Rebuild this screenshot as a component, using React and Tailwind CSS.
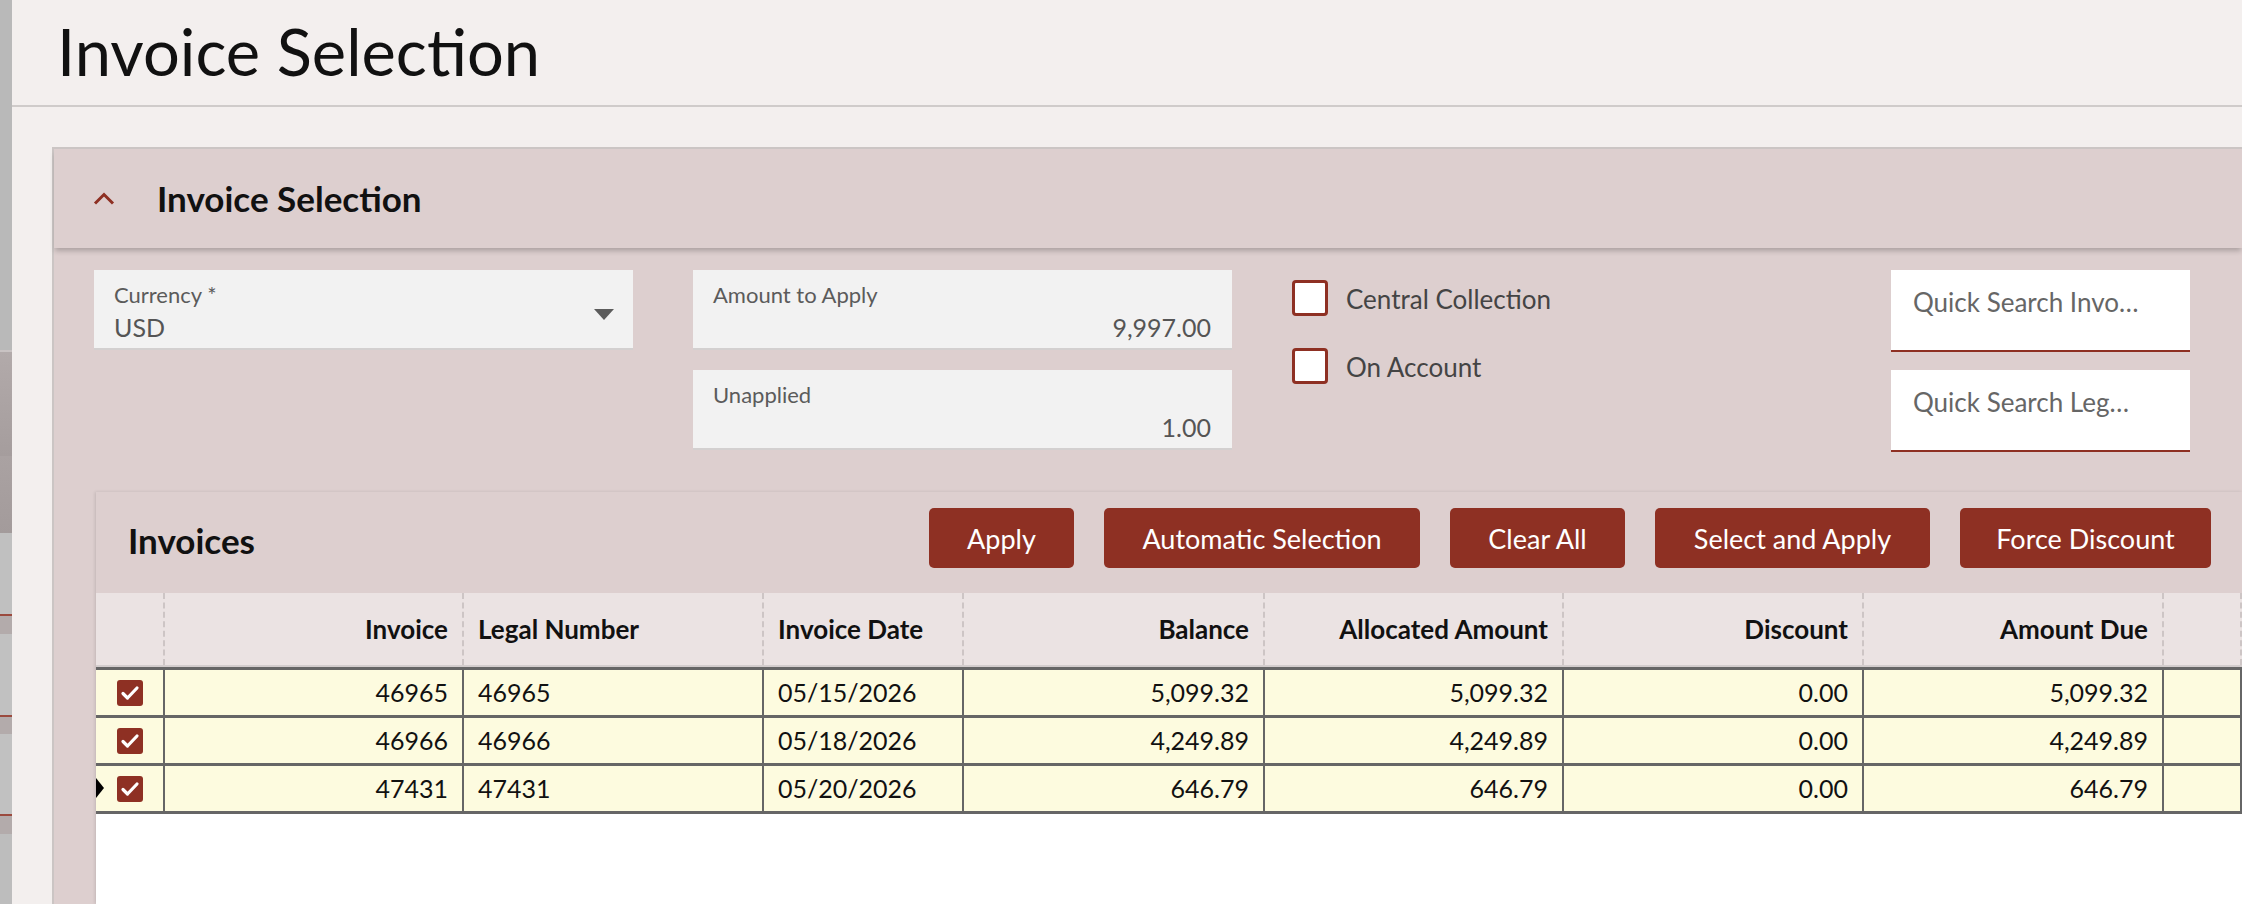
import React from 'react';

const buttons = [
  { label: 'Apply', w: 'w-[145px]' },
  { label: 'Automatic Selection', w: 'w-[316px]' },
  { label: 'Clear All', w: 'w-[175px]' },
  { label: 'Select and Apply', w: 'w-[275px]' },
  { label: 'Force Discount', w: 'w-[251px]' },
];

const columns = [
  { label: 'Invoice', right: true },
  { label: 'Legal Number' },
  { label: 'Invoice Date' },
  { label: 'Balance', right: true },
  { label: 'Allocated Amount', right: true },
  { label: 'Discount', right: true },
  { label: 'Amount Due', right: true },
  { label: '' },
];

const rows = [
  ['46965', '46965', '05/15/2026', '5,099.32', '5,099.32', '0.00', '5,099.32', ''],
  ['46966', '46966', '05/18/2026', '4,249.89', '4,249.89', '0.00', '4,249.89', ''],
  ['47431', '47431', '05/20/2026', '646.79', '646.79', '0.00', '646.79', ''],
];

const gridCols = 'grid grid-cols-[69px_299px_300px_200px_301px_299px_300px_300px_1fr]';

const Field = ({ label, value, dropdown }) => (
  <div className="flex h-[80px] w-[539px] border-b-2 border-[#d3d0d0] bg-[#f2f2f2]">
    <div className="flex flex-1 flex-col pl-[20px] pr-[21px] pt-[14px]">
      <span className="text-[22px] leading-[22px] text-[#5b5b5b]">{label}</span>
      <span className={`mt-[9px] text-[25px] leading-[25px] text-[#555] ${dropdown ? '' : 'text-right'}`}>{value}</span>
    </div>
    {dropdown && (
      <svg className="mr-[19px] mt-[39px] h-[11px] w-[20px]" viewBox="0 0 20 11">
        <polygon points="0,0 20,0 10,11" fill="#5c5c5c" />
      </svg>
    )}
  </div>
);

const CheckOption = ({ label }) => (
  <div className="flex items-center gap-[18px]">
    <div className="h-[36px] w-[36px] rounded-[4px] border-[3px] border-[#8e3023] bg-white" />
    <span className="mt-[2px] text-[26px] leading-[26px] text-[#444]">{label}</span>
  </div>
);

const QuickSearch = ({ text }) => (
  <div className="h-[82px] w-[299px] border-b-2 border-[#8e3023] bg-white pl-[22px] pt-[19px] text-[26px] leading-[26px] text-[#666]">
    {text}
  </div>
);

const CheckedBox = () => (
  <div className="flex h-[26px] w-[26px] items-center justify-center rounded-[3px] bg-[#8e3023]">
    <svg className="h-[26px] w-[26px]" viewBox="0 0 26 26">
      <polyline points="6,13.5 10.5,18 20,8" fill="none" stroke="#fff" strokeWidth="3.2" strokeLinecap="round" strokeLinejoin="round" />
    </svg>
  </div>
);

export default function App() {
  return (
    <div className="flex h-[904px] w-full overflow-hidden bg-[#f3efee] text-[#111] [font-family:Lato,sans-serif]">
      {/* sliver of the neighbouring pane */}
      <div className="flex w-[12px] flex-none flex-col">
        <div className="h-[350px] bg-[#b9b9b9]" />
        <div className="h-[106px] border-t-2 border-[#c9c3c3] bg-gradient-to-b from-[#b2aaaa] to-[#a59d9d]" />
        <div className="h-[77px] bg-gradient-to-b from-[#aaa2a2] to-[#a39b9b]" />
        <div className="h-[81px] bg-[#c0c0c0]" />
        <div className="h-[20px] border-t-2 border-[#9b4a3e] bg-[#b3abab]" />
        <div className="h-[81px] bg-[#c1c1c1]" />
        <div className="h-[19px] border-t-2 border-[#9b4a3e] bg-[#b3abab]" />
        <div className="h-[80px] bg-[#c1c1c1]" />
        <div className="h-[20px] border-t-2 border-[#9b4a3e] bg-[#b3abab]" />
        <div className="flex-1 bg-[#bdbdbd]" />
      </div>

      <div className="flex min-w-0 flex-1 flex-col">
        <div className="h-[107px] flex-none border-b-2 border-[#cfcbca] pl-[45px] pt-[19px]">
          <h1 className="text-[65px] font-normal leading-[65px]">Invoice Selection</h1>
        </div>

        <div className="flex min-h-0 flex-1 pl-[40px] pt-[40px]">
          <section className="flex min-w-0 flex-1 flex-col border-l-2 border-t-2 border-[#cbc5c4] bg-[#ddcfcf]">
            <div className="relative z-10 flex h-[99px] flex-none items-center bg-[#ddcfcf] pl-[39px] shadow-[0_4px_5px_-1px_rgba(0,0,0,0.22)]">
              <svg className="h-[13px] w-[22px]" viewBox="0 0 22 13">
                <polyline points="2,11.5 11,2.5 20,11.5" fill="none" stroke="#8e3023" strokeWidth="3" />
              </svg>
              <h2 className="ml-[42px] text-[35px] font-bold leading-[35px]">Invoice Selection</h2>
            </div>

            <div className="flex min-h-0 flex-1 flex-col pt-[22px]">
              <div className="flex items-start pl-[40px]">
                <Field label="Currency *" value="USD" dropdown />
                <div className="ml-[60px] flex flex-col gap-[20px]">
                  <Field label="Amount to Apply" value="9,997.00" />
                  <Field label="Unapplied" value="1.00" />
                </div>
                <div className="ml-[60px] flex w-[599px] flex-col gap-[32px] pt-[10px]">
                  <CheckOption label="Central Collection" />
                  <CheckOption label="On Account" />
                </div>
                <div className="flex flex-col gap-[18px]">
                  <QuickSearch text="Quick Search Invo…" />
                  <QuickSearch text="Quick Search Leg…" />
                </div>
              </div>

              <div className="ml-[42px] mt-[40px] flex min-h-0 flex-1 flex-col shadow-[-1px_0_3px_rgba(0,0,0,0.12)]">
                <div className="flex h-[101px] flex-none items-start bg-[#ddcfcf] pl-[32px] pr-[31px] pt-[16px]">
                  <h3 className="mt-[15px] text-[35px] font-bold leading-[35px]">Invoices</h3>
                  <div className="ml-auto flex gap-[30px]">
                    {buttons.map((b) => (
                      <button
                        key={b.label}
                        className={`flex h-[60px] items-center justify-center rounded-[5px] bg-[#8e3023] text-[27px] leading-[27px] text-white ${b.w}`}
                      >
                        {b.label}
                      </button>
                    ))}
                  </div>
                </div>

                <div className={`${gridCols} flex-none border-b-2 border-[#d3cdcd] bg-[#ebe3e3]`}>
                  <div className="h-[72px] border-r-2 border-dashed border-[#cdc5c5]" />
                  {columns.map((c, i) => (
                    <div
                      key={i}
                      className={`flex h-[72px] items-center border-r-2 border-dashed border-[#cdc5c5] px-[14px] text-[26px] font-bold leading-[26px] ${c.right ? 'justify-end' : ''}`}
                    >
                      {c.label}
                    </div>
                  ))}
                </div>

                {rows.map((r, ri) => (
                  <div
                    key={ri}
                    className={`${gridCols} flex-none border-t-[3px] border-[#666] bg-[#fdfbdf] ${ri === rows.length - 1 ? 'border-b-[3px]' : ''}`}
                  >
                    <div className="relative flex h-[45px] items-center justify-center border-r-2 border-[#666]">
                      {ri === rows.length - 1 && (
                        <svg className="absolute left-0 top-[12px] h-[20px] w-[8px]" viewBox="0 0 8 20">
                          <polygon points="0,0 8,10 0,20" fill="#000" />
                        </svg>
                      )}
                      <CheckedBox />
                    </div>
                    {r.map((v, ci) => (
                      <div
                        key={ci}
                        className={`flex h-[45px] items-center border-r-2 border-[#666] px-[14px] text-[25px] leading-[25px] text-[#111] ${columns[ci].right ? 'justify-end' : ''}`}
                      >
                        {v}
                      </div>
                    ))}
                  </div>
                ))}

                <div className="flex-1 bg-white" />
              </div>
            </div>
          </section>
        </div>
      </div>
    </div>
  );
}
